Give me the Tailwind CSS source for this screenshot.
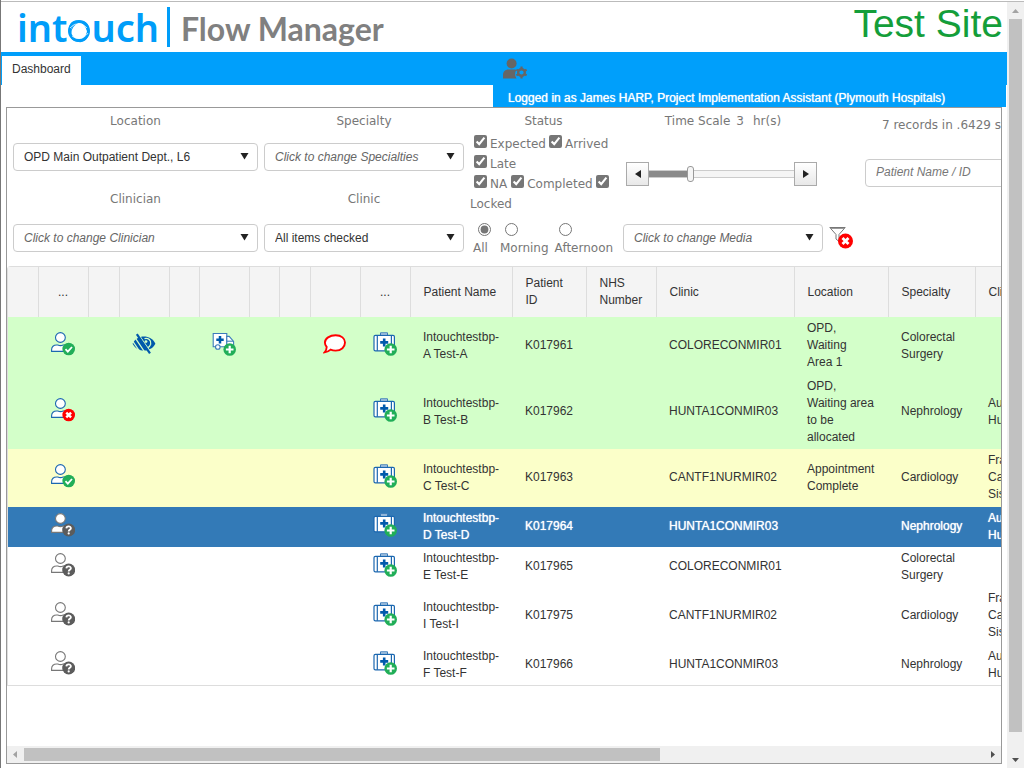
<!DOCTYPE html>
<html lang="en">
<head>
  <meta charset="UTF-8" />
  <meta name="viewport" content="width=device-width, initial-scale=1.0"/>
  <title>Flow Manager - Dashboard</title>
  <script src="https://cdn.jsdelivr.net/npm/@tailwindcss/browser@4"></script>
</head>
<body class="h-screen overflow-hidden bg-white font-['Liberation_Sans',Arial,sans-serif] text-xs leading-[17px] text-[#333]">

  <!-- Icon definitions -->
  <svg class="hidden">
    <symbol id="badge-ok" viewBox="0 0 14 14">
      <circle cx="7" cy="7" r="6.3" fill="#21ae58" />
      <path d="M3.8 7.2l2.3 2.4 4.2-4.6" fill="none" stroke="#fff" stroke-width="1.8" />
    </symbol>
    <symbol id="badge-no" viewBox="0 0 14 14">
      <circle cx="7" cy="7" r="6.3" fill="#f00" />
      <path d="M4.6 4.6l4.8 4.8M9.4 4.6l-4.8 4.8" fill="none" stroke="#fff" stroke-width="2.4" />
    </symbol>
    <symbol id="badge-ask" viewBox="0 0 14 14">
      <circle cx="7" cy="7" r="6.5" fill="#5c5c5c" />
      <path d="M4.7 5.4C4.8 2.8 9.2 2.8 9.2 5.3C9.2 6.8 7 6.8 7 8.4" fill="none" stroke="#fff" stroke-width="1.8" />
      <circle cx="7" cy="10.4" r="1.1" fill="#fff" />
    </symbol>
    <symbol id="badge-plus" viewBox="0 0 14 14">
      <circle cx="7" cy="7" r="6.3" fill="#21ae58" />
      <path d="M7 3.2v7.6M3.2 7h7.6" fill="none" stroke="#fff" stroke-width="2.2" />
    </symbol>
    <symbol id="person" viewBox="0 0 24 24">
      <circle cx="9.4" cy="5.5" r="4.9" fill="#fff" stroke="currentColor" stroke-width="1.1" />
      <path d="M.6 19.4v-1.6C.6 14.8 2.6 13 5.6 13h1.2c1.6.8 3.8.8 5.4 0h1.2c3 0 5 1.8 5 4.8v1.6z" fill="#fff" stroke="currentColor" stroke-width="1.1" />
    </symbol>
    <symbol id="case" viewBox="0 0 24 24">
      <path d="M7.5 3.4V.8h7v2.6" fill="#b8cfe6" stroke="#3d7cba" stroke-width="1" />
      <rect x="1" y="3.4" width="20.4" height="15.4" rx="1.4" fill="#fff" stroke="#1b67b0" stroke-width="1.2" />
      <path d="M4.3 3.4v15.4M18.4 3.4v15.4" stroke="#1b67b0" stroke-width="1.2" />
      <path d="M11.2 6.4v8M7.2 10.4h8" stroke="#0059ab" stroke-width="2.6" />
      <use href="#badge-plus" x="10.7" y="10.5" width="14" height="14" />
    </symbol>
    <symbol id="truck" viewBox="0 0 24 24">
      <path d="M1.2 1.5h13.6v13.3H1.2z" fill="#fff" stroke="#3d7cba" stroke-width="1.1" />
      <path d="M14.8 4.4h2.4l4.4 5v5.4h-6.8z" fill="#fff" stroke="#3d7cba" stroke-width="1.1" />
      <path d="M15 9.2h6" stroke="#3d7cba" stroke-width="1.1" />
      <path d="M8 4v7.4M4.3 7.7h7.4" stroke="#0059ab" stroke-width="2.5" />
      <circle cx="5.8" cy="15" r="2.3" fill="#fff" stroke="#3d7cba" stroke-width="1.1" />
      <use href="#badge-plus" x="10.7" y="10.5" width="14" height="14" />
    </symbol>
    <symbol id="low-vision" viewBox="0 0 24 24">
      <path d="M.6 11.7C5.2 2 18.8 2 23.4 11.7C18.8 20.8 5.2 20.8.6 11.7z" fill="#0059ab" />
      <path d="M12.5 6.6c3.6-1.2 7 2 6.2 5.6-.5 2-2 3.2-3.4 3.6" fill="none" stroke="#d3ffc9" stroke-width="1.3" />
      <circle cx="14" cy="9.6" r="1.4" fill="#d3ffc9" />
      <path d="M6.6 2.5L19 20.5M3 5.6L13 20.5M.8 9.4L8.4 20.5" stroke="#d3ffc9" stroke-width="1.3" />
      <path d="M4.8 2.2L18 21.3" stroke="#0059ab" stroke-width="2.2" />
    </symbol>
    <symbol id="bubble" viewBox="0 0 24 24">
      <path d="M12.6 3.3C18.4 3.3 22 6.4 22 10.6S18.4 18.6 12.6 18.6C10.8 18.6 9 18.2 7.6 17.6C6 19 4 20.2 1.6 20.4C3 18.8 3.6 17.2 3.7 15C2.5 13.7 1.9 12.3 1.9 10.6C1.9 6.4 6.8 3.3 12.6 3.3z" fill="#fff" stroke="#f00" stroke-width="1.9" />
    </symbol>
  </svg>

  <div class="flex h-full border-l border-[#777]">
    <div class="flex min-w-0 flex-1 flex-col">

      <!-- Header -->
      <header class="mt-px flex h-[51px] shrink-0 items-start justify-between border-t border-[#bbb]">
        <div class="flex h-full items-center pl-4">
          <div class="flex items-center font-['Noto_Sans',sans-serif] text-[38px] leading-[50px] font-semibold text-[#009df9]" aria-label="intouch">
            <span>int</span>
            <svg class="mt-2 h-6 w-6" viewBox="0 0 24 24" fill="none" stroke="#009df9">
              <circle cx="12" cy="12" r="9.5" stroke-width="3" />
              <ellipse cx="12.6" cy="12" rx="8" ry="10.5" stroke-width="1" transform="rotate(35 12 12)" />
              <ellipse cx="12" cy="12.6" rx="10.8" ry="8.6" stroke-width="1" transform="rotate(60 12 12)" />
              <path d="M3 9C7 4 15 3 20 9" stroke="#fff" stroke-width=".7" />
              <path d="M21 14C17 20 10 21 5 17" stroke="#fff" stroke-width=".7" />
            </svg>
            <span>uch</span>
          </div>
          <div class="ml-2 h-10 w-[3px] bg-[#009df9]"></div>
          <h1 class="ml-[11px] pt-1 font-[Lato,sans-serif] text-[32px] leading-10 font-bold text-[#808080]">Flow Manager</h1>
        </div>
        <div class="pr-1 text-[39px] leading-[43px] text-[#149e3a]">Test Site</div>
      </header>

      <!-- Navigation bar -->
      <nav class="flex h-[33px] shrink-0 items-end bg-[#009ffb]">
        <a href="#" class="ml-px flex h-[29px] items-center bg-white px-[10px] pb-[2px]">Dashboard</a>
        <button class="mb-1 ml-[422px]" aria-label="User settings">
          <svg class="h-6 w-6" viewBox="0 0 24 24" fill="#666">
            <circle cx="8.6" cy="6.5" r="5" />
            <path d="M0 21.5V18C0 14.5 2.2 12.4 5.4 12.4H11.8C12.6 12.4 13.2 12.6 13 13.4C11.6 16 12 19.6 13.6 21.5z" />
            <circle cx="18.5" cy="15.5" r="3.3" fill="none" stroke="#666" stroke-width="2.4" />
            <path d="M18.5 9.6v2.4M18.5 19v2.4M13.4 12.6l2 1.1M21.6 17.3l2 1.1M13.4 18.4l2-1.1M21.6 13.7l2-1.1" stroke="#666" stroke-width="2.2" />
          </svg>
        </button>
      </nav>
      <div class="mr-px ml-[492px] h-[22px] shrink-0 bg-[#009ffb] pt-[5px] pl-[15px] text-white [text-shadow:0_0_1px_#fff]">
        Logged in as James HARP, Project Implementation Assistant (Plymouth Hospitals)
      </div>

      <!-- Dashboard panel -->
      <main class="mx-[5px] mb-1 flex min-h-0 flex-1 flex-col border border-[#999]">
        <div class="min-h-0 flex-1 overflow-hidden">

          <!-- Filters -->
          <form class="flex h-[158px] w-max gap-[6px] pt-1 pb-[14px] pl-[6px] font-['DejaVu_Sans',Verdana,sans-serif] leading-[18px] text-[#777]">
            <div class="flex w-[245px] flex-col text-center">
              <label for="location">Location</label>
              <div class="relative mt-[13px] mb-[19px]">
                <select id="location" class="block h-7 w-full appearance-none rounded border border-[#ccc] bg-white pl-[10px] font-['Liberation_Sans',Arial,sans-serif] text-[#333]">
                  <option>OPD Main Outpatient Dept., L6</option>
                </select>
                <svg class="pointer-events-none absolute top-[9px] right-2 h-2 w-[10px]" viewBox="0 0 10 8" fill="#222"><path d="M.5 1h8L4.5 7.5z" /></svg>
              </div>
              <label for="clinician">Clinician</label>
              <div class="relative mt-4">
                <select id="clinician" class="block h-7 w-full appearance-none rounded border border-[#ccc] bg-white pl-[10px] font-['Liberation_Sans',Arial,sans-serif] text-[#666] italic">
                  <option>Click to change Clinician</option>
                </select>
                <svg class="pointer-events-none absolute top-[9px] right-2 h-2 w-[10px]" viewBox="0 0 10 8" fill="#222"><path d="M.5 1h8L4.5 7.5z" /></svg>
              </div>
            </div>

            <div class="flex w-[200px] flex-col text-center">
              <label for="specialty">Specialty</label>
              <div class="relative mt-[13px] mb-[19px]">
                <select id="specialty" class="block h-7 w-full appearance-none rounded border border-[#ccc] bg-white pl-[10px] font-['Liberation_Sans',Arial,sans-serif] text-[#666] italic">
                  <option>Click to change Specialties</option>
                </select>
                <svg class="pointer-events-none absolute top-[9px] right-2 h-2 w-[10px]" viewBox="0 0 10 8" fill="#222"><path d="M.5 1h8L4.5 7.5z" /></svg>
              </div>
              <label for="clinic">Clinic</label>
              <div class="relative mt-4">
                <select id="clinic" class="block h-7 w-full appearance-none rounded border border-[#ccc] bg-white pl-[10px] font-['Liberation_Sans',Arial,sans-serif] text-[#333]">
                  <option>All items checked</option>
                </select>
                <svg class="pointer-events-none absolute top-[9px] right-2 h-2 w-[10px]" viewBox="0 0 10 8" fill="#222"><path d="M.5 1h8L4.5 7.5z" /></svg>
              </div>
            </div>

            <fieldset class="w-[147px]">
              <legend class="w-full text-center">Status</legend>
              <div class="mt-1 leading-5">
                <label><input type="checkbox" checked class="mr-[3px] ml-1 size-[13px] accent-[#767676]" />Expected</label><label><input type="checkbox" checked class="mr-[3px] ml-[3px] size-[13px] accent-[#767676]" />Arrived</label><br />
                <label><input type="checkbox" checked class="mr-[3px] ml-1 size-[13px] accent-[#767676]" />Late</label><br />
                <label><input type="checkbox" checked class="mr-[3px] ml-1 size-[13px] accent-[#767676]" />NA</label><label><input type="checkbox" checked class="mr-[3px] ml-1 size-[13px] accent-[#767676]" />Completed</label><label><input type="checkbox" checked class="ml-[3px] size-[13px] accent-[#767676]" /> Locked</label>
              </div>
              <div class="mt-[9px] flex pl-[3px] leading-4">
                <label class="mr-[9px] flex flex-col gap-1"><input type="radio" name="session" checked class="ml-[5px] size-[13px] accent-[#767676]" />All</label>
                <label class="mr-[6px] flex flex-col gap-1"><input type="radio" name="session" class="ml-[5px] size-[13px] accent-[#767676]" />Morning</label>
                <label class="flex flex-col gap-1"><input type="radio" name="session" class="ml-1 size-[13px] accent-[#767676]" />Afternoon</label>
              </div>
            </fieldset>

            <div class="flex w-[200px] flex-col text-center">
              <label for="scale" class="flex justify-center"><span>Time Scale</span><span class="ml-[6px]">3</span><span class="ml-[9px]">hr(s)</span></label>
              <div class="mt-8 mb-[38px] flex h-6 items-center pr-[6px] pl-[3px]">
                <button type="button" aria-label="Decrease" class="flex h-6 w-[23px] items-center justify-center border border-[#aaa] bg-linear-to-b from-white to-[#e8e8e8]">
                  <svg class="h-2 w-[6px]" viewBox="0 0 6 8" fill="#222"><path d="M6 0v8L0 4z" /></svg>
                </button>
                <input id="scale" type="range" min="0" max="11" value="3" class="h-2 w-0 min-w-0 flex-1 appearance-none border-y border-[#ccc] bg-[linear-gradient(to_right,#8a8a8a_28%,#f5f5f5_28%)] [&::-webkit-slider-thumb]:h-4 [&::-webkit-slider-thumb]:w-[7px] [&::-webkit-slider-thumb]:appearance-none [&::-webkit-slider-thumb]:rounded-[3px] [&::-webkit-slider-thumb]:border [&::-webkit-slider-thumb]:border-[#999] [&::-webkit-slider-thumb]:bg-[#f5f5f5]" />
                <button type="button" aria-label="Increase" class="flex h-6 w-[23px] items-center justify-center border border-[#aaa] bg-linear-to-b from-white to-[#e8e8e8]">
                  <svg class="h-2 w-[6px]" viewBox="0 0 6 8" fill="#222"><path d="M0 0v8l6-4z" /></svg>
                </button>
              </div>
              <div class="relative">
                <select aria-label="Media" class="block h-7 w-full appearance-none rounded border border-[#ccc] bg-white pl-[10px] font-['Liberation_Sans',Arial,sans-serif] text-[#666] italic">
                  <option>Click to change Media</option>
                </select>
                <svg class="pointer-events-none absolute top-[9px] right-2 h-2 w-[10px]" viewBox="0 0 10 8" fill="#222"><path d="M.5 1h8L4.5 7.5z" /></svg>
              </div>
            </div>

            <button type="button" aria-label="Clear filters" class="mb-[3px] h-6 w-6 self-end">
              <svg class="h-6 w-6" viewBox="0 0 24 24">
                <path d="M.8 2.5h15.4L10 9.5v7L7 14V9.5z" fill="#fff" stroke="#777" stroke-width="1" />
                <path d="M1.6 3.5h13.6" stroke="#999" stroke-width="1" />
                <circle cx="16.5" cy="16" r="7.5" fill="#f00" />
                <path d="M13.5 13l6 6M19.5 13l-6 6" stroke="#fff" stroke-width="2.8" />
              </svg>
            </button>

            <div class="ml-[6px] flex w-[200px] flex-col">
              <p class="mt-1 pl-[17px]">7 records in .6429 seconds</p>
              <input type="text" aria-label="Patient Name / ID" placeholder="Patient Name / ID" class="mt-[25px] h-7 rounded border border-[#ccc] px-[10px] pb-[3px] font-['Liberation_Sans',Arial,sans-serif] italic placeholder:text-[#777]" />
            </div>
          </form>

          <!-- Patient list -->
          <div class="w-max rounded-t border-y border-l border-[#ddd]">
            <table class="w-[1120px] table-fixed border-collapse text-left">
              <colgroup>
                <col class="w-[30px]" /><col class="w-[50px]" /><col class="w-[31px]" /><col class="w-[50px]" />
                <col class="w-[30px]" /><col class="w-[50px]" /><col class="w-[30px]" /><col class="w-[31px]" />
                <col class="w-[50px]" /><col class="w-[50px]" /><col class="w-[102px]" /><col class="w-[74px]" />
                <col class="w-[70px]" /><col class="w-[138px]" /><col class="w-[94px]" /><col class="w-[87px]" />
                <col />
              </colgroup>
              <thead>
                <tr id="headRow" class="h-[50px] bg-[#f4f4f4]"></tr>
              </thead>
              <tbody id="patientRows"></tbody>
            </table>
          </div>
        </div>

        <!-- Horizontal scroll bar -->
        <div class="flex h-[17px] shrink-0 items-center justify-between bg-[#f0f0f0]">
          <svg class="h-[17px] w-[17px]" viewBox="0 0 17 17" fill="#a3a3a3"><path d="M10 5v7L6 8.5z" /></svg>
          <div class="flex flex-1"><div class="h-[13px] w-[66.3%] bg-[#c1c1c1]"></div></div>
          <svg class="h-[17px] w-[17px]" viewBox="0 0 17 17" fill="#505050"><path d="M7 5v7l4-3.5z" /></svg>
        </div>
      </main>
    </div>

    <!-- Vertical scroll bar -->
    <div class="mt-px flex w-[17px] shrink-0 flex-col items-center border-t border-[#bbb] bg-[#f0f0f0]">
      <svg class="h-[17px] w-[17px] shrink-0" viewBox="0 0 17 17" fill="#a3a3a3"><path d="M5 11h7L8.5 7z" /></svg>
      <div class="w-[13px] flex-1"><div class="h-[97.4%] bg-[#c1c1c1]"></div></div>
      <svg class="h-[17px] w-[17px] shrink-0" viewBox="0 0 17 17" fill="#505050"><path d="M5 7h7l-3.5 4z" /></svg>
    </div>
  </div>

  <script>
    const headings = ["", "...", "", "", "", "", "", "", "", "...", "Patient Name", "Patient ID", "NHS Number", "Clinic", "Location", "Specialty", "Clinician"];

    const patients = [
      { status: "ok", flags: true, name: "Intouchtestbp-A Test-A", id: "K017961", clinic: "COLORECONMIR01", location: "OPD, Waiting Area&nbsp;1", specialty: "Colorectal Surgery", clinician: "", row: "h-[58px] bg-[#d3ffc9]" },
      { status: "no", name: "Intouchtestbp-B Test-B", id: "K017962", clinic: "HUNTA1CONMIR03", location: "OPD, Waiting area to be allocated", specialty: "Nephrology", clinician: "Audrey<br>Hunt", row: "h-[74px] bg-[#d3ffc9]" },
      { status: "ok", name: "Intouchtestbp-C Test-C", id: "K017963", clinic: "CANTF1NURMIR02", location: "Appointment Complete", specialty: "Cardiology", clinician: "Frances<br>Cant<br>Sister", row: "h-[58px] bg-[#fbffc9]" },
      { status: "ask", name: "Intouchtestbp-D Test-D", id: "K017964", clinic: "HUNTA1CONMIR03", location: "", specialty: "Nephrology", clinician: "Audrey<br>Hunt", row: "h-10 bg-[#337ab7] text-white [text-shadow:0_0_1px_#fff]" },
      { status: "ask", name: "Intouchtestbp-E Test-E", id: "K017965", clinic: "COLORECONMIR01", location: "", specialty: "Colorectal Surgery", clinician: "", row: "h-10" },
      { status: "ask", name: "Intouchtestbp-I Test-I", id: "K017975", clinic: "CANTF1NURMIR02", location: "", specialty: "Cardiology", clinician: "Frances<br>Cant<br>Sister", row: "h-[58px]" },
      { status: "ask", name: "Intouchtestbp-F Test-F", id: "K017966", clinic: "HUNTA1CONMIR03", location: "", specialty: "Nephrology", clinician: "Audrey<br>Hunt", row: "h-10" },
    ];

    function iconCell(content) {
      return `<td class="pb-[5px]">${content}</td>`;
    }

    function icon(name) {
      return `<svg class="mx-auto h-6 w-6"><use href="#${name}" width="24" height="24" /></svg>`;
    }

    function personIcon(status) {
      const color = status === "ask" ? "text-[#777]" : "text-[#1b67b0]";
      return `
        <svg class="mx-auto h-6 w-6 ${color}" viewBox="0 0 24 24">
          <use href="#person" width="24" height="24" />
          <use href="#badge-${status}" x="10.7" y="10" width="14" height="14" />
        </svg>`;
    }

    function textCell(text) {
      return `<td class="pt-0 pr-[11px] pb-px pl-[13px]">${text}</td>`;
    }

    document.getElementById("headRow").innerHTML = headings
      .map((h, i) =>
        i < 10
          ? `<th class="border-l border-[#ddd] text-center font-normal first:border-l-0">${h}</th>`
          : `<th class="border-l border-[#ddd] pr-[11px] pl-[13px] font-normal">${h}</th>`
      )
      .join("");

    document.getElementById("patientRows").innerHTML = patients
      .map(
        (p) => `
        <tr class="${p.row}">
          ${iconCell("")}
          ${iconCell(personIcon(p.status))}
          ${iconCell("")}
          ${iconCell(p.flags ? icon("low-vision") : "")}
          ${iconCell("")}
          ${iconCell(p.flags ? icon("truck") : "")}
          ${iconCell("")}
          ${iconCell("")}
          ${iconCell(p.flags ? icon("bubble") : "")}
          ${iconCell(icon("case"))}
          ${textCell(p.name)}
          ${textCell(p.id)}
          ${textCell("")}
          ${textCell(p.clinic)}
          ${textCell(p.location)}
          ${textCell(p.specialty)}
          ${textCell(p.clinician)}
        </tr>`
      )
      .join("");
  </script>
</body>
</html>
